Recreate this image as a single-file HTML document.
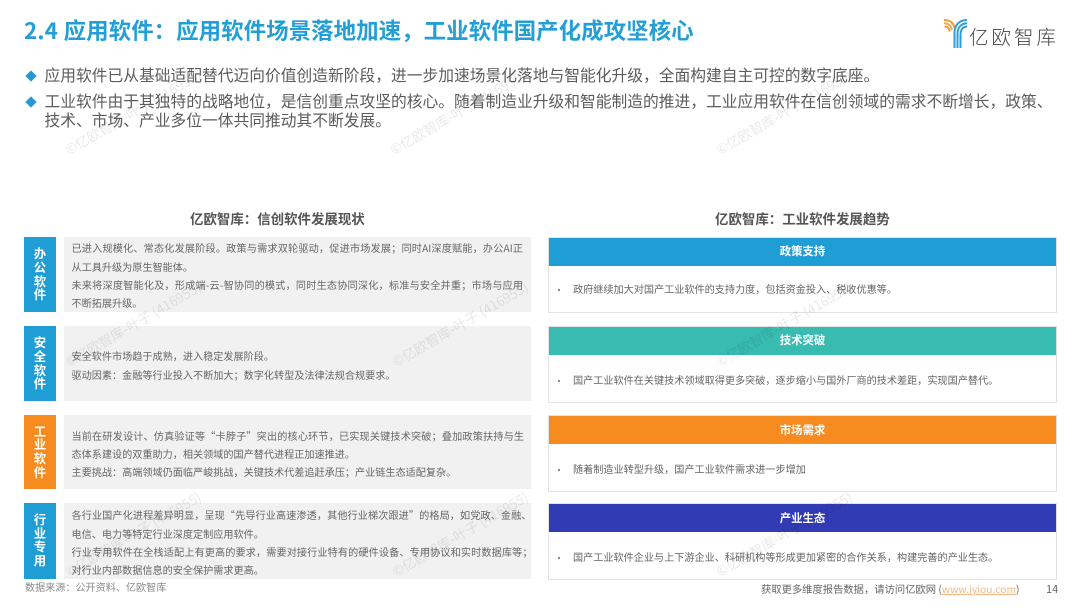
<!DOCTYPE html>
<html lang="zh-CN">
<head>
<meta charset="utf-8">
<title>2.4 应用软件</title>
<style>
html,body{margin:0;padding:0;background:#fff}
#p{position:relative;width:1080px;height:608px;overflow:hidden;background:#fff;font-family:"Noto Sans CJK SC","Liberation Sans",sans-serif;filter:blur(.35px)}
#p div{position:absolute}
.t{white-space:nowrap}
.title{left:24px;top:14px;height:32px;line-height:32px;font-size:22.5px;font-weight:700;color:#249fd6;word-spacing:.6px}
.b{left:44.5px;height:20px;line-height:20px;font-size:15.75px;color:#5c5c5c}
.d{left:26.5px;width:8px;height:8px;background:#249ad2;transform:rotate(45deg)}
.h{top:207.5px;height:20px;line-height:20px;font-size:13.45px;font-weight:700;color:#555}
.l{left:24px;width:32px}
.g{left:64px;width:467px;background:#f1f1f1}
.c{left:24px;width:32px;text-align:center;height:14px;line-height:14px;font-size:12.4px;font-weight:700;color:#fff}
.x{left:71.5px;height:18px;line-height:18px;font-size:10.14px;color:#666}
.j{white-space:normal;text-align:justify;text-align-last:justify}
.box{left:548px;width:509px;box-sizing:border-box;border:1.5px solid #e2e2e2;background:#fff}
.hd{left:549px;width:507px;height:28px}
.ht{left:549px;width:507px;text-align:center;height:16px;line-height:16px;font-size:11.4px;font-weight:700;color:#fff}
.r{left:573px;height:18px;line-height:18px;font-size:10.14px;color:#666}
.dot{left:557.5px;width:2.4px;height:2.4px;border-radius:50%;background:#666}
.w{font-size:13.5px;height:18px;line-height:18px;color:#000;opacity:.085;transform:rotate(-30deg);transform-origin:0 50%;z-index:5}
</style>
</head>
<body>
<div id="p">
<div class="t title">2.4 应用软件：应用软件场景落地加速，工业软件国产化成攻坚核心</div>

<svg style="position:absolute;left:940px;top:14px" width="34" height="36" viewBox="940 14 34 36" fill="none">
<g stroke-width="2">
<path d="M944 20C950 20 953.5 23 954.5 28" stroke="#f59a3c"/>
<path d="M944 23.2C948 23.2 951 25.5 952 30" stroke="#f7a94f"/>
<path d="M944.5 26.5C947 26.5 949 28 950 31.5" stroke="#f59a3c"/>
<path d="M967 20C959 20.2 954.5 25 954.5 33V48" stroke="#2d9fd8"/>
<path d="M967 23.2C961 23.4 957.5 27.5 957.5 34V48" stroke="#2d9fd8"/>
<path d="M967 26.5C963 26.8 960.5 29.5 960.5 35V48" stroke="#2d9fd8"/>
</g>
</svg>
<div class="t" style="left:969px;top:23px;height:26px;line-height:26px;font-size:19.5px;font-weight:300;letter-spacing:3px;color:#444">亿欧智库</div>

<div class="d" style="top:71.5px"></div>
<div class="t b" style="top:65px">应用软件已从基础适配替代迈向价值创造新阶段，进一步加速场景化落地与智能化升级，全面构建自主可控的数字底座。</div>
<div class="d" style="top:97.5px"></div>
<div class="t b" style="top:91px">工业软件由于其独特的战略地位，是信创重点攻坚的核心。随着制造业升级和智能制造的推进，工业应用软件在信创领域的需求不断增长，政策、</div>
<div class="t b" style="top:110px">技术、市场、产业多位一体共同推动其不断发展。</div>

<div class="t h" style="left:190px">亿欧智库：信创软件发展现状</div>
<div class="t h" style="left:715px">亿欧智库：工业软件发展趋势</div>

<div class="l" style="top:237px;height:75px;background:#1f9dd5"></div>
<div class="g" style="top:237px;height:75px"></div>
<div class="c" style="top:246.3px">办</div><div class="c" style="top:260.3px">公</div><div class="c" style="top:274px">软</div><div class="c" style="top:287.3px">件</div>
<div class="x j" style="top:239px;width:451.5px">已进入规模化、常态化发展阶段。政策与需求双轮驱动，促进市场发展；同时AI深度赋能，办公AI正</div>
<div class="t x" style="top:257.5px">从工具升级为原生智能体。</div>
<div class="x j" style="top:275.5px;width:451.5px">未来将深度智能化及，形成端-云-智协同的模式，同时生态协同深化，标准与安全并重；市场与应用</div>
<div class="t x" style="top:293.5px">不断拓展升级。</div>

<div class="l" style="top:326px;height:75px;background:#1f9dd5"></div>
<div class="g" style="top:326px;height:75px"></div>
<div class="c" style="top:335.3px">安</div><div class="c" style="top:349.3px">全</div><div class="c" style="top:363.3px">软</div><div class="c" style="top:376.3px">件</div>
<div class="t x" style="top:347px">安全软件市场趋于成熟，进入稳定发展阶段。</div>
<div class="t x" style="top:365.5px">驱动因素：金融等行业投入不断加大；数字化转型及法律法规合规要求。</div>

<div class="l" style="top:415px;height:74px;background:#f68b1f"></div>
<div class="g" style="top:415px;height:74px"></div>
<div class="c" style="top:424.3px">工</div><div class="c" style="top:437.3px">业</div><div class="c" style="top:451.3px">软</div><div class="c" style="top:465.3px">件</div>
<div class="x j" style="top:427px;width:452.5px">当前在研发设计、仿真验证等“卡脖子”突出的核心环节，已实现关键技术突破；叠加政策扶持与生</div>
<div class="t x" style="top:444.5px">态体系建设的双重助力，相关领域的国产替代进程正加速推进。</div>
<div class="t x" style="top:463px">主要挑战：高端领域仍面临严峻挑战，关键技术代差追赶承压；产业链生态适配复杂。</div>

<div class="l" style="top:503px;height:76px;background:#1f9dd5"></div>
<div class="g" style="top:503px;height:76px"></div>
<div class="c" style="top:512.3px">行</div><div class="c" style="top:526.3px">业</div><div class="c" style="top:539.3px">专</div><div class="c" style="top:553.3px">用</div>
<div class="x j" style="top:506px;width:460px">各行业国产化进程差异明显，呈现“先导行业高速渗透，其他行业梯次跟进”的格局，如党政、金融、</div>
<div class="t x" style="top:525px">电信、电力等特定行业深度定制应用软件。</div>
<div class="x j" style="top:542.5px;width:461px">行业专用软件在全栈适配上有更高的要求，需要对接行业特有的硬件设备、专用协议和实时数据库等；</div>
<div class="t x" style="top:561px">对行业内部数据信息的安全保护需求更高。</div>

<div class="box" style="top:237px;height:76px"></div>
<div class="hd" style="top:238px;background:#1f9dd5"></div>
<div class="t ht" style="top:243px">政策支持</div>
<div class="dot" style="top:288.5px"></div>
<div class="t r" style="top:280px">政府继续加大对国产工业软件的支持力度，包括资金投入、税收优惠等。</div>

<div class="box" style="top:326px;height:77px"></div>
<div class="hd" style="top:327px;background:#38bbb0"></div>
<div class="t ht" style="top:332px">技术突破</div>
<div class="dot" style="top:379.5px"></div>
<div class="t r" style="top:371px">国产工业软件在关键技术领域取得更多突破，逐步缩小与国外厂商的技术差距，实现国产替代。</div>

<div class="box" style="top:415px;height:77px"></div>
<div class="hd" style="top:416px;background:#f68b1f"></div>
<div class="t ht" style="top:422px">市场需求</div>
<div class="dot" style="top:468.5px"></div>
<div class="t r" style="top:460px">随着制造业转型升级，国产工业软件需求进一步增加</div>

<div class="box" style="top:503px;height:77px"></div>
<div class="hd" style="top:504px;background:#303bb4"></div>
<div class="t ht" style="top:510px">产业生态</div>
<div class="dot" style="top:556.5px"></div>
<div class="t r" style="top:548px">国产工业软件企业与上下游企业、科研机构等形成更加紧密的合作关系，构建完善的产业生态。</div>

<div class="t" style="left:25px;top:579px;height:16px;line-height:16px;font-size:10.1px;color:#8a8a8a">数据来源：公开资料、亿欧智库</div>
<div class="t" style="left:761px;top:581px;height:16px;line-height:16px;font-size:10.3px;color:#666">获取更多维度报告数据，请访问亿欧网 (<span style="color:#f5b783;text-decoration:underline">www.iyiou.com</span>)</div>
<div class="t" style="left:1046px;top:581px;height:16px;line-height:16px;font-size:11px;color:#666">14</div>

<div class="t w" style="left:66px;top:141px">©亿欧智库-叶子 (416955)</div>
<div class="t w" style="left:391px;top:141px">©亿欧智库-叶子 (416955)</div>
<div class="t w" style="left:717px;top:141px">©亿欧智库-叶子 (416955)</div>
<div class="t w" style="left:66px;top:353px">©亿欧智库-叶子 (416955)</div>
<div class="t w" style="left:393px;top:353px">©亿欧智库-叶子 (416955)</div>
<div class="t w" style="left:717px;top:353px">©亿欧智库-叶子 (416955)</div>
<div class="t w" style="left:66px;top:563px">©亿欧智库-叶子 (416955)</div>
<div class="t w" style="left:393px;top:563px">©亿欧智库-叶子 (416955)</div>
<div class="t w" style="left:717px;top:563px">©亿欧智库-叶子 (416955)</div>
</div>
</body>
</html>
